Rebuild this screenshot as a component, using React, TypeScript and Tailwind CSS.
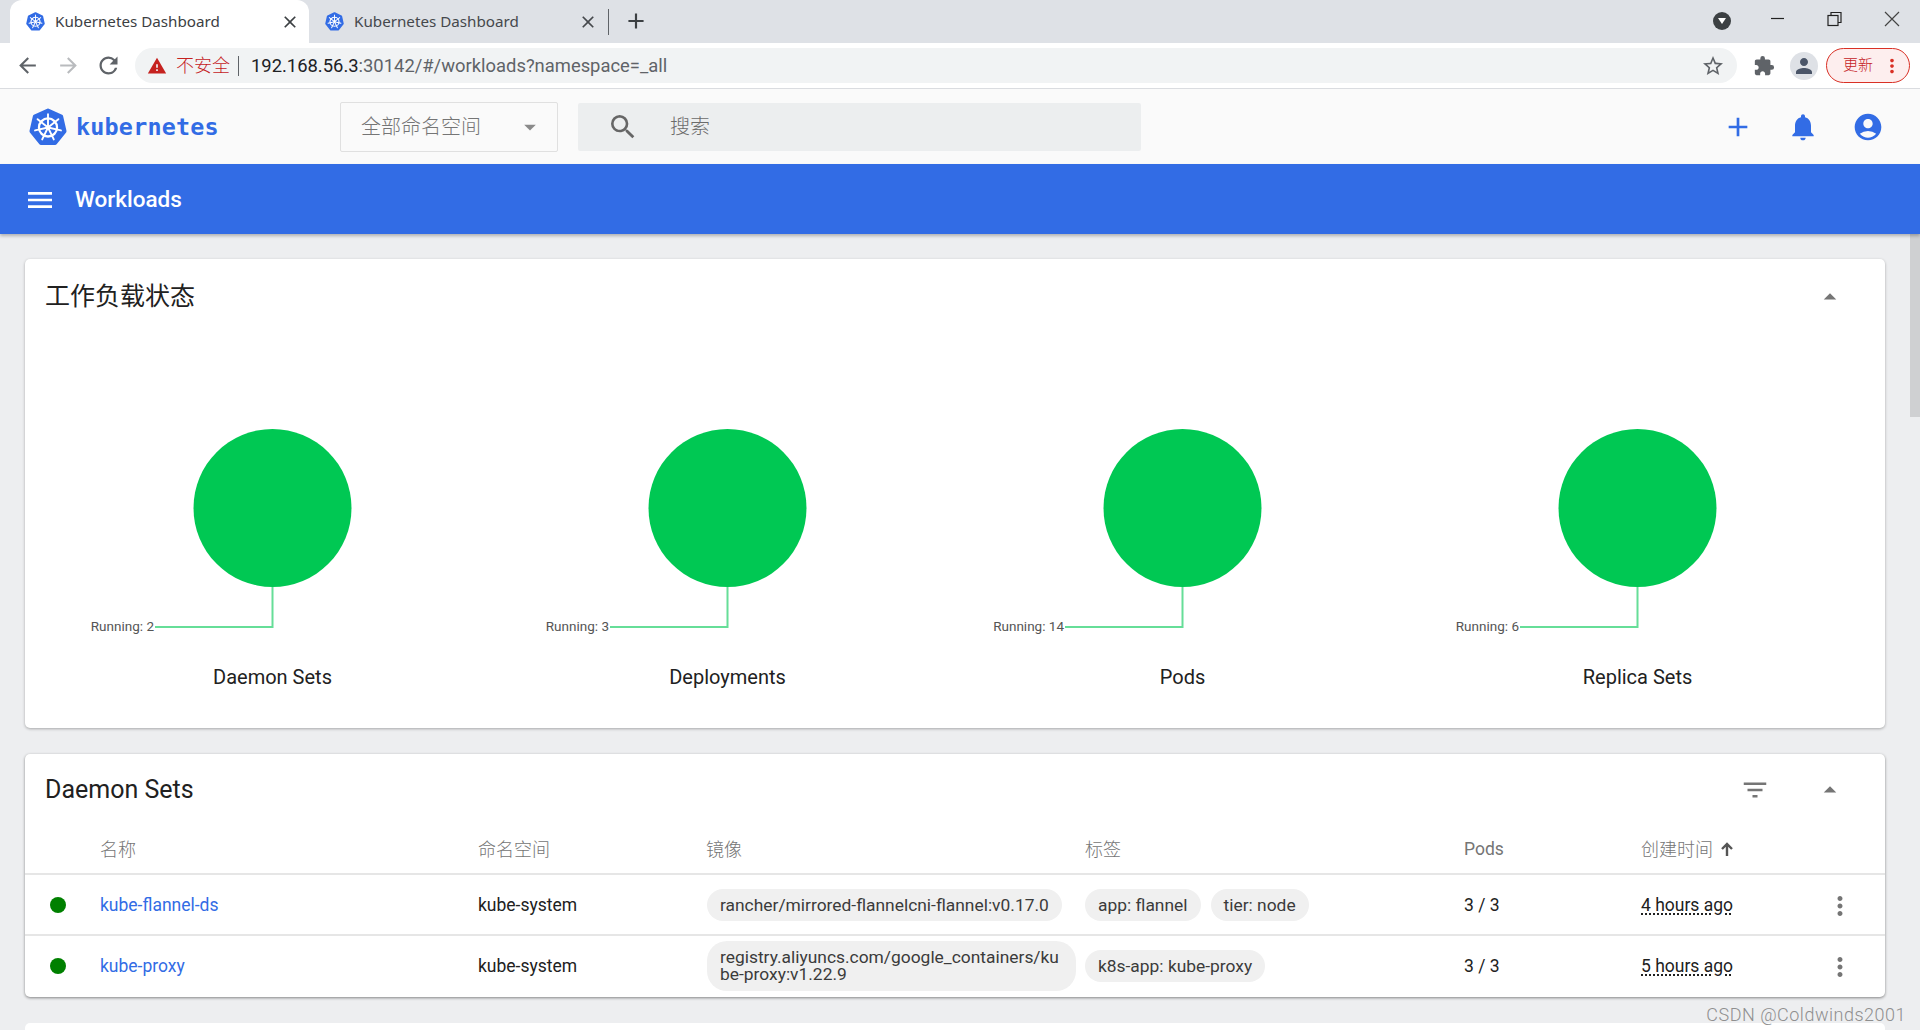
import React from "react";
import {
  MdAdd, MdNotifications, MdAccountCircle, MdMenu, MdSearch, MdFilterList, MdMoreVert,
  MdArrowDropDown, MdArrowDropUp, MdExtension, MdStarBorder, MdRefresh,
  MdArrowBack, MdArrowForward, MdWarning, MdPerson, MdClose,
} from "react-icons/md";

const CJK = "font-['Roboto','Noto_Sans_CJK_SC',sans-serif]";

function KubeLogo({ size }: { size: number }) {
  const spokes = [0, 51.43, 102.86, 154.29, 205.71, 257.14, 308.57];
  return (
    <svg width={size} height={size} viewBox="0 0 40 40" className="shrink-0">
      <polygon points="20,2.5 34,9 37.5,24.5 27.5,37 12.5,37 2.5,24.5 6,9" fill="#326ce5" stroke="#326ce5" strokeWidth="4" strokeLinejoin="round" />
      <circle cx="20" cy="20.5" r="9.5" fill="none" stroke="#fff" strokeWidth="2.4" />
      <circle cx="20" cy="20.5" r="2.4" fill="#fff" />
      {spokes.map((a) => (
        <g key={a} transform={`rotate(${a} 20 20.5)`}>
          <line x1="20" y1="20.5" x2="20" y2="6.5" stroke="#fff" strokeWidth="2" strokeLinecap="round" />
        </g>
      ))}
    </svg>
  );
}

function Chart({ title, label }: { title: string; label: string }) {
  return (
    <div className="flex flex-col items-center">
      <svg width="455" height="239" viewBox="0 0 455 239" className="block">
        <circle cx="227.5" cy="79" r="79" fill="#00c853" />
        <polyline points="227.5,158 227.5,198 110,198" fill="none" stroke="#00c853" strokeOpacity="0.6" strokeWidth="2" />
        <text x="109" y="202" textAnchor="end" fontSize="13.5" fill="#555" fontFamily="Roboto">{label}</text>
      </svg>
      <div className="mt-[-5px] text-[20px] leading-[28px] text-[#212121]">{title}</div>
    </div>
  );
}

function Chip({ children, wrap }: { children: React.ReactNode; wrap?: boolean }) {
  return (
    <span className={`inline-block rounded-[20px] bg-[#f0f0f0] px-[13px] text-[17.4px] text-[#3b3b3b] ${wrap ? "w-[369px] py-[8px] leading-[17px] break-all" : "h-[32px] leading-[32px] whitespace-nowrap"}`}>
      {children}
    </span>
  );
}

const cols = "grid grid-cols-[75px_378px_228px_379px_379px_177px_199px_1fr] items-center";

function Row({ name, image, labels, time, wrap }: { name: string; image: string; labels: string[]; time: string; wrap?: boolean }) {
  return (
    <div className={`${cols} h-[61px] border-t-[2px] border-[#e6e6e6] text-[17.5px] text-[#212121]`}>
      <div className="flex justify-center pr-[9px]"><span className="h-[16px] w-[16px] rounded-full bg-[#008000]" /></div>
      <div className="pt-[2px] text-[#326ce5]">{name}</div>
      <div className="pt-[2px]">kube-system</div>
      <div className="pl-[1px]"><Chip wrap={wrap}>{image}</Chip></div>
      <div className="flex gap-[10px]">{labels.map((l) => <Chip key={l}>{l}</Chip>)}</div>
      <div className="pt-[2px]">3 / 3</div>
      <div className="pt-[2px] underline decoration-dotted decoration-[1.5px] underline-offset-[2px]">{time}</div>
      <div className="flex pt-[2px]"><MdMoreVert size={30} className="ml-[-15px] text-[#757575]" /></div>
    </div>
  );
}

export default function App() {
  return (
    <div className={`relative flex h-[1030px] w-[1920px] flex-col overflow-hidden bg-[#edeef0] ${CJK}`}>
      {/* tab strip */}
      <div className="flex h-[43px] shrink-0 items-end bg-[#dee1e6] pl-[10px]">
        <div className="flex h-[43px] w-[299px] items-center rounded-t-[12px] bg-white pl-[16px] pr-[9px]">
          <KubeLogo size={19} />
          <span className="ml-[10px] flex-1 font-['Noto_Sans',sans-serif] text-[15.2px] text-[#3c4043]">Kubernetes Dashboard</span>
          <MdClose size={20} className="text-[#3c4043]" />
        </div>
        <div className="flex h-[43px] w-[299px] items-center pl-[16px] pr-[10px]">
          <KubeLogo size={19} />
          <span className="ml-[10px] flex-1 font-['Noto_Sans',sans-serif] text-[15.2px] text-[#45484c]">Kubernetes Dashboard</span>
          <MdClose size={20} className="text-[#45484c]" />
        </div>
        <div className="mb-[8px] h-[26px] w-px self-end bg-[#5f6368]" />
        <MdAdd size={26} className="mb-[9px] ml-[14px] self-end text-[#3c4043]" />
        <div className="flex-1" />
        <div className="mr-[1px] mb-[13px] flex h-[18px] w-[18px] items-center justify-center rounded-full bg-[#3c4043]">
          <span className="h-0 w-0 border-x-[4px] border-t-[6px] border-x-transparent border-t-white" />
        </div>
        <svg width="180" height="43" viewBox="0 0 180 43" className="mr-[8px]" fill="none" stroke="#222" strokeWidth="1.2">
          <line x1="39" y1="18.5" x2="52" y2="18.5" />
          <rect x="96" y="15.5" width="10" height="10" fill="none" />
          <path d="M99 15.5 V12.5 H109 V22.5 H106" />
          <path d="M153 12 L167 26 M167 12 L153 26" stroke="#444" />
        </svg>
      </div>
      {/* toolbar */}
      <div className="flex h-[46px] shrink-0 items-center border-b border-[#dadce0] bg-white">
        <MdArrowBack size={25} className="ml-[15px] text-[#5f6368]" />
        <MdArrowForward size={25} className="ml-[16px] text-[#b9bbbe]" />
        <MdRefresh size={27} className="ml-[14px] text-[#5f6368]" />
        <div className="ml-[13px] flex h-[35px] w-[1602px] items-center rounded-full bg-[#f1f3f4]">
          <MdWarning size={20} className="ml-[12px] text-[#c5221f]" />
          <span className="ml-[9px] text-[18px] font-light text-[#c5221f]">不安全</span>
          <span className="ml-[8px] h-[20px] w-px bg-[#5f6368]" />
          <span className="ml-[12px] text-[18.4px] text-[#202124]">192.168.56.3<span className="text-[#5f6368]">:30142/#/workloads?namespace=_all</span></span>
          <div className="flex-1" />
          <MdStarBorder size={24} className="mr-[12px] text-[#5f6368]" />
        </div>
        <MdExtension size={22} className="ml-[16px] text-[#5f6368]" />
        <div className="ml-[15px] flex h-[28px] w-[28px] items-center justify-center rounded-full bg-[#dee1e6]">
          <MdPerson size={24} className="text-[#4a5568]" />
        </div>
        <div className="ml-[8px] flex h-[35px] w-[84px] items-center rounded-full border border-[#d93025] bg-[#fdeeee] pl-[16px] text-[15px] font-light text-[#c5221f]">
          更新
          <MdMoreVert size={22} className="ml-[8px] text-[#d93025]" />
        </div>
      </div>
      {/* app header */}
      <div className="flex h-[75px] shrink-0 items-center bg-[#fafafa]">
        <div className="ml-[29px]"><KubeLogo size={38} /></div>
        <span className="ml-[9px] w-[264px] pt-[2px] font-['DejaVu_Sans_Mono',monospace] text-[23.4px] font-bold tracking-[0.2px] text-[#326ce5]">kubernetes</span>
        <div className="flex h-[50px] w-[218px] items-center rounded-[2px] border border-[#e0e0e0] pl-[20px] pr-[13px] text-[20px] font-light text-[#757575]">
          <span className="flex-1 pt-[1px]">全部命名空间</span>
          <MdArrowDropDown size={28} className="text-[#8a8a8a]" />
        </div>
        <div className="ml-[20px] flex h-[48px] w-[563px] items-center rounded-[2px] bg-[#eceeef] pl-[29px] text-[20px] font-light text-[#6b6b6b]">
          <MdSearch size={32} className="text-[#666]" />
          <span className="ml-[31px]">搜索</span>
        </div>
        <div className="flex flex-1 justify-end pr-[36px] pt-[1px]">
          <MdAdd size={32} className="text-[#326ce5]" />
          <MdNotifications size={32} className="ml-[33px] text-[#326ce5]" />
          <MdAccountCircle size={32} className="ml-[33px] text-[#326ce5]" />
        </div>
      </div>
      {/* blue bar */}
      <div className="z-10 flex h-[70px] shrink-0 items-center bg-[#326ce5] pt-[2px] text-white shadow-[0_2px_3px_rgba(0,0,0,0.25)]">
        <MdMenu size={32} className="ml-[24px]" />
        <span className="ml-[19px] text-[22.5px] font-medium">Workloads</span>
      </div>
      {/* content */}
      <div className="flex flex-1 flex-col gap-[26px] pl-[25px] pr-[35px] pt-[25px]">
        <section className="h-[469px] shrink-0 rounded-[5px] bg-white shadow-[0_1px_3px_rgba(0,0,0,0.3)]">
          <div className="flex h-[75px] items-center pl-[20px] pr-[40px]">
            <h2 className="flex-1 text-[25px] font-normal text-[#212121]">工作负载状态</h2>
            <MdArrowDropUp size={30} className="text-[#757575]" />
          </div>
          <div className="mt-[95px] grid grid-cols-4 px-[20px]">
            <Chart title="Daemon Sets" label="Running: 2" />
            <Chart title="Deployments" label="Running: 3" />
            <Chart title="Pods" label="Running: 14" />
            <Chart title="Replica Sets" label="Running: 6" />
          </div>
        </section>
        <section className="h-[243px] shrink-0 rounded-[5px] bg-white shadow-[0_1px_3px_rgba(0,0,0,0.45)]">
          <div className="flex h-[72px] items-center pl-[20px] pr-[40px]">
            <h2 className="flex-1 text-[25px] text-[#212121]">Daemon Sets</h2>
            <MdFilterList size={30} className="mr-[45px] text-[#757575]" />
            <MdArrowDropUp size={30} className="text-[#757575]" />
          </div>
          <div className={`${cols} h-[47px] text-[18px] font-light text-[#757575]`}>
            <div />
            <div>名称</div>
            <div>命名空间</div>
            <div>镜像</div>
            <div>标签</div>
            <div className="text-[17.5px] font-normal">Pods</div>
            <div className="flex items-center">
              创建时间
              <svg width="14" height="14" viewBox="0 0 14 14" className="mb-[2px] ml-[7px]" fill="none" stroke="#555" strokeWidth="2.4">
                <path d="M7 14 V2 M2 7 L7 2 L12 7" />
              </svg>
            </div>
            <div />
          </div>
          <Row name="kube-flannel-ds" image="rancher/mirrored-flannelcni-flannel:v0.17.0" labels={["app: flannel", "tier: node"]} time="4 hours ago" />
          <Row name="kube-proxy" image="registry.aliyuncs.com/google_containers/kube-proxy:v1.22.9" labels={["k8s-app: kube-proxy"]} time="5 hours ago" wrap />
        </section>
        <section className="h-[40px] shrink-0 rounded-t-[5px] bg-white" />
      </div>
      {/* scrollbar thumb + watermark overlays */}
      <div className="absolute right-0 top-[234px] h-[183px] w-[10px] bg-[#cfd0d2]" />
      <div className="absolute right-[14px] top-[1001px] text-[18px] font-light tracking-[0.5px] text-[#8f8f8f]">CSDN @Coldwinds2001</div>
    </div>
  );
}
